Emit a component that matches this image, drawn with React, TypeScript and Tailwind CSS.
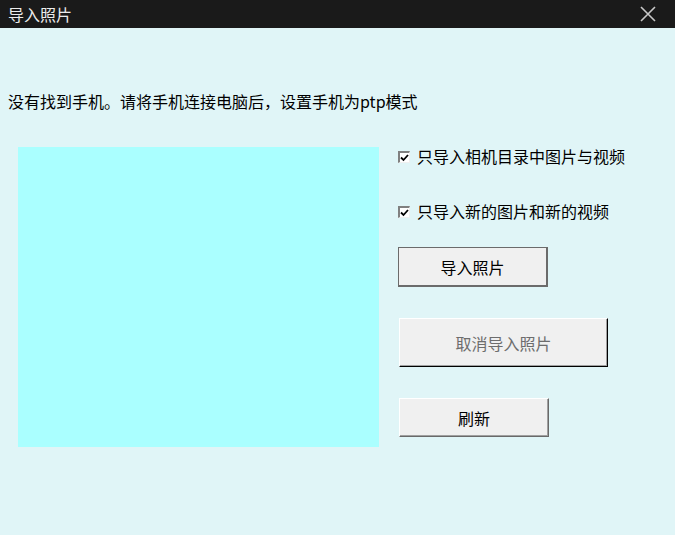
import React from "react";

const font = { fontFamily: '"Noto Sans CJK SC", "Noto Sans", sans-serif' };

function Check({ label }: { label: string }) {
  return (
    <div className="flex h-[20px] items-center">
      <div className="flex h-[12px] w-[12px] items-center justify-center border-t-2 border-l-2 border-r border-b border-t-[#808080] border-l-[#808080] border-r-[#f0f0f0] border-b-[#f0f0f0] bg-white">
        <svg width="9" height="8" viewBox="0 0 9 8">
          <path d="M1 3.5 L3.5 6 L8 1" fill="none" stroke="#000" strokeWidth="1.8" />
        </svg>
      </div>
      <span className="ml-[7px] -mt-[2px] text-[16px] leading-[20px] text-black">{label}</span>
    </div>
  );
}

export default function App() {
  return (
    <div className="flex h-[535px] w-[675px] flex-col bg-[#e0f5f7]" style={font}>
      <div className="flex h-[28px] items-center justify-between bg-[#1a1a1a] pl-[8px] pr-[19px]">
        <span className="text-[16px] leading-[20px] text-[#ececec]">导入照片</span>
        <svg width="16" height="16" viewBox="0 0 16 16">
          <path d="M1 1 L15 15 M15 1 L1 15" stroke="#c8c8c8" strokeWidth="1.6" fill="none" />
        </svg>
      </div>
      <div className="mt-[63px] h-[20px] pl-[8px] text-[16px] leading-[20px] text-black">
        没有找到手机。请将手机连接电脑后，设置手机为ptp模式
      </div>
      <div className="mt-[36px] flex">
        <div className="ml-[18px] h-[300px] w-[361px] bg-[#aaffff]" />
        <div className="ml-[19px] flex flex-col">
          <Check label="只导入相机目录中图片与视频" />
          <div className="mt-[35px]">
            <Check label="只导入新的图片和新的视频" />
          </div>
          <button className="mt-[25px] flex h-[40px] w-[150px] items-center justify-center border-t border-l border-r-2 border-b-2 border-[#6b6b6b] bg-[#f0f0f0] text-[16px] text-black">
            导入照片
          </button>
          <button className="ml-[1px] mt-[31px] flex h-[49px] w-[209px] items-center justify-center border-t border-l border-r border-b border-t-white border-l-white border-r-black border-b-black bg-[#f0f0f0] text-[16px] text-[#6d6d6d] shadow-[inset_-1px_-1px_0_0_#a0a0a0]">
            取消导入照片
          </button>
          <button className="ml-[1px] mt-[31px] flex h-[39px] w-[150px] items-center justify-center border-t border-l border-r border-b border-t-white border-l-white border-r-[#696969] border-b-[#696969] bg-[#f0f0f0] text-[16px] text-black shadow-[inset_-1px_-1px_0_0_#a0a0a0]">
            刷新
          </button>
        </div>
      </div>
    </div>
  );
}
